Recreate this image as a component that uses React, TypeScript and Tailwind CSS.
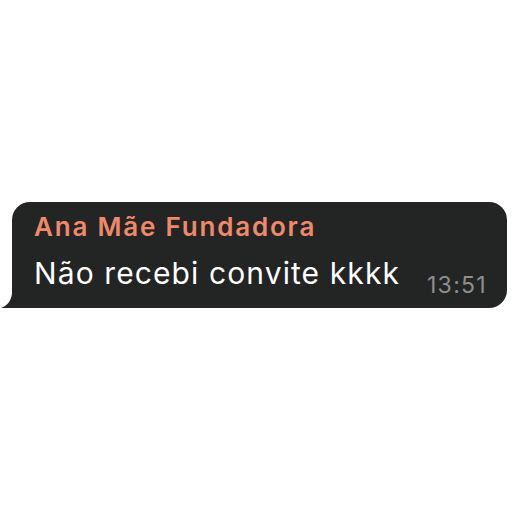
export default function App() {
  return (
    <div className="flex h-[512px] w-[512px] items-start bg-white pt-[202px] pl-[12px]" style={{ fontFamily: 'Inter, "Liberation Sans", Arial, sans-serif' }}>
      <div className="relative">
        <svg className="absolute bottom-0 left-[-11px]" width="24" height="22" viewBox="0 0 24 22">
          <path d="M11 0 L24 0 L24 22 L0 22 C 6 20 10 15 11 8 Z" fill="#232424" />
        </svg>
        <div className="relative flex h-[106px] w-[495px] flex-col rounded-[18px] rounded-bl-none bg-[#232424] pl-[22px] pr-[20px] pt-[10px]">
          <div className="text-[26px] font-semibold leading-[30px] tracking-[1.8px] text-[#f0896a]">Ana Mãe Fundadora</div>
          <div className="mt-[11px] flex items-end justify-between">
            <span className="text-[30px] leading-[40px] tracking-[1.1px] text-white">Não recebi convite kkkk</span>
            <span className="text-[23px] leading-[16px] tracking-[1.3px] text-[#8e8e8e]">13:51</span>
          </div>
        </div>
      </div>
    </div>
  );
}
